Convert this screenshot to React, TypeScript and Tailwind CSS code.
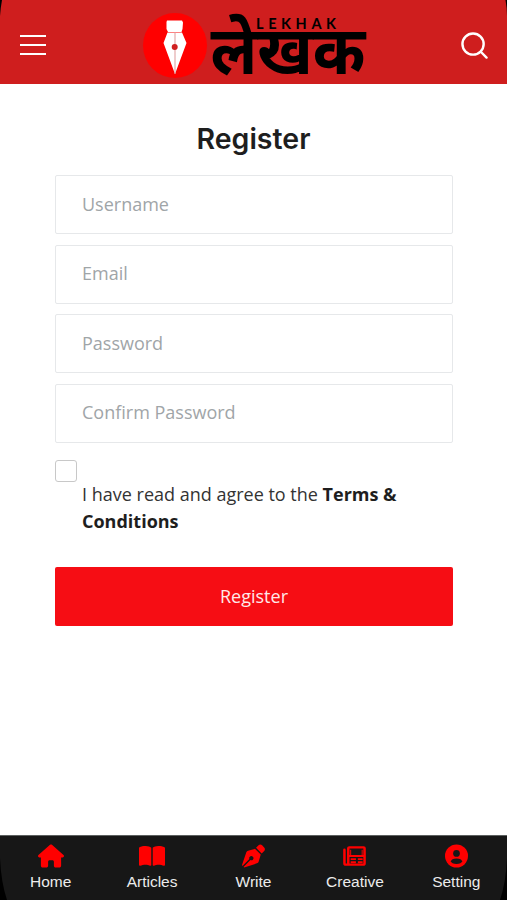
import { FaBookOpen, FaHouse, FaPenNib } from 'react-icons/fa6';

const fields = [
  { name: 'username', placeholder: 'Username', type: 'text' },
  { name: 'email', placeholder: 'Email', type: 'email' },
  { name: 'password', placeholder: 'Password', type: 'password' },
  { name: 'confirm', placeholder: 'Confirm Password', type: 'password' },
];

function NewsIcon({ className }: { className?: string }) {
  return (
    <svg viewBox="0 0 24 21" fill="none" stroke="currentColor" className={className}>
      <path d="M5.500 19.500V2.500a1 1 0 0 1 1-1h15a1 1 0 0 1 1 1v15.500a1.500 1.500 0 0 1-1.500 1.500H3a1.500 1.500 0 0 1-1.500-1.500V4" strokeWidth="2.600" strokeLinejoin="round" strokeLinecap="round" />
      <path d="M8 4v6M20 4v6" strokeWidth="1" />
      <path d="M6 10.500h16M8 13.800h5.500M15.500 13.800h5M8 17h5.500M15.500 17h5" strokeWidth="2" />
    </svg>
  );
}

function AccountIcon({ className }: { className?: string }) {
  return (
    <svg viewBox="0 0 24 24" className={className}>
      <circle cx="12" cy="12" r="12" fill="currentColor" />
      <circle cx="12" cy="9.300" r="3.500" fill="#171717" />
      <ellipse cx="12" cy="17.500" rx="5.800" ry="2.900" fill="#171717" />
    </svg>
  );
}

const tabs = [
  { label: 'Home', icon: FaHouse, size: 'w-[26px]' },
  { label: 'Articles', icon: FaBookOpen, size: 'w-[26px]' },
  { label: 'Write', icon: FaPenNib, size: 'w-[23px]' },
  { label: 'Creative', icon: NewsIcon, size: 'w-[23px]' },
  { label: 'Setting', icon: AccountIcon, size: 'w-[23px]' },
];

function Logo() {
  return (
    <svg width="228" height="72" viewBox="140 6 228 72">
      <ellipse cx="175" cy="45.500" rx="32" ry="32.500" fill="#ff0000" />
      <path d="M167 20.500h15l1 2-.5 6.500-1 3h-13.500l-1.500-3v-7zM167.500 32.500h14.500l4.500 10.500-11.500 31-11.500-31z" fill="#fff" />
      <path d="M175 32v42" stroke="#d99" strokeWidth="1" />
      <circle cx="174.700" cy="47" r="3" fill="#d01f1f" />
      <text x="210.500" y="73.500" textLength="155" lengthAdjust="spacingAndGlyphs" fontSize="68" fontWeight="700" fontFamily="'Noto Sans', sans-serif">लेखक</text>
      <text x="256" y="28.500" textLength="80" fontSize="14.500" fontWeight="700" fontFamily="Lato, sans-serif">LEKHAK</text>
    </svg>
  );
}

export default function App() {
  return (
    <div className="relative flex h-[900px] w-[507px] flex-col overflow-hidden bg-white font-['Open_Sans',sans-serif]">
      <header className="flex h-[84px] shrink-0 items-center justify-between bg-[#cf1e1e] pr-[19px] pl-5">
        <button className="mt-[5px] flex w-[26px] flex-col gap-[7px]" aria-label="Menu">
          <span className="h-0.5 bg-white" />
          <span className="h-0.5 bg-white" />
          <span className="h-0.5 bg-white" />
        </button>
        <Logo />
        <button aria-label="Search" className="mt-[7px]">
          <svg width="27" height="27" viewBox="0 0 28 28" fill="none" stroke="#fff" strokeWidth="2.500">
            <circle cx="12.500" cy="12.500" r="11" />
            <path d="M20.500 20.500l6 6" strokeLinecap="round" />
          </svg>
        </button>
      </header>
      <main className="flex-1 px-[55px] pt-9">
        <h1 className="text-center font-['Inter',sans-serif] text-[28.500px] leading-[38px] font-semibold text-[#1e1e1e]">Register</h1>
        <form className="mt-[17px] w-[398px]">
          {fields.map((f) => (
            <input key={f.name} type={f.type} placeholder={f.placeholder} className="mb-[10.500px] block h-[59px] w-full rounded-xs border border-[#e6e8ea] px-[26px] pb-0.5 text-[18px] placeholder:text-[#9fa5a8]" />
          ))}
          <div className="mt-[17px] flex gap-[5px] text-[18px] leading-[27px] text-[#333]">
            <span className="size-[22px] shrink-0 rounded-[3px] border-[1.500px] border-[#c8c8c8]" />
            <p className="pt-[21px]">
              I have read and agree to the <strong className="font-bold text-[#1e1e1e]">Terms &amp; Conditions</strong>
            </p>
          </div>
          <button type="button" className="mt-8 h-[59px] w-full rounded-xs bg-[#f60d14] text-[18px] text-[#ffe9e9]">Register</button>
        </form>
      </main>
      <nav className="grid h-[65px] shrink-0 grid-cols-5 border-t border-[#5c605f] bg-[#171717]">
        {tabs.map(({ label, icon: Icon, size }) => (
          <a key={label} className="flex flex-col items-center pt-2 font-['Liberation_Sans',sans-serif] text-[15.500px] leading-7 text-[#ececec]">
            <Icon className={`${size} h-6 shrink-0 text-[#ff0000]`} />
            {label}
          </a>
        ))}
      </nav>
      {/* rounded device corners */}
      <svg className="pointer-events-none absolute top-0 left-0" width="507" height="900">
        <path d="M0 0h2Q.5 8 0 16zM507 0h-1.500Q507 8 507 16zM0 858Q1 882 7 900H0zM507 858Q506 882 500 900h7z" />
      </svg>
    </div>
  );
}
